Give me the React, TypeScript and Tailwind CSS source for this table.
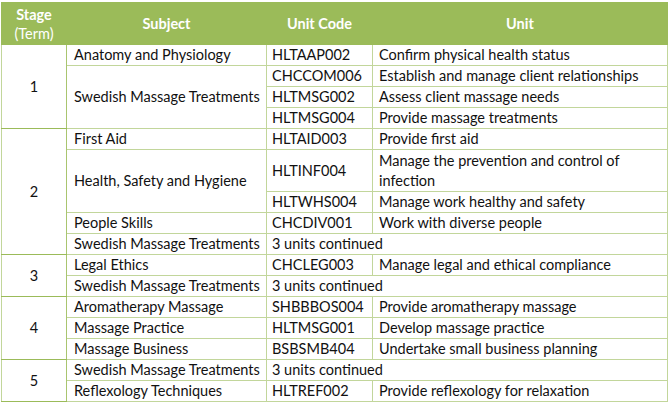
import React from 'react';

type Row = {
  stage?: { label: string; span: number };
  subject?: { label: string; span: number };
  code?: string;
  unit?: string;
  continued?: boolean;
  tall?: boolean;
};

const rows: Row[] = [
  { stage: { label: '1', span: 4 }, subject: { label: 'Anatomy and Physiology', span: 1 }, code: 'HLTAAP002', unit: 'Confirm physical health status' },
  { subject: { label: 'Swedish Massage Treatments', span: 3 }, code: 'CHCCOM006', unit: 'Establish and manage client relationships' },
  { code: 'HLTMSG002', unit: 'Assess client massage needs' },
  { code: 'HLTMSG004', unit: 'Provide massage treatments' },
  { stage: { label: '2', span: 5 }, subject: { label: 'First Aid', span: 1 }, code: 'HLTAID003', unit: 'Provide first aid' },
  { subject: { label: 'Health, Safety and Hygiene', span: 2 }, code: 'HLTINF004', unit: 'Manage the prevention and control of infection', tall: true },
  { code: 'HLTWHS004', unit: 'Manage work healthy and safety' },
  { subject: { label: 'People Skills', span: 1 }, code: 'CHCDIV001', unit: 'Work with diverse people' },
  { subject: { label: 'Swedish Massage Treatments', span: 1 }, continued: true },
  { stage: { label: '3', span: 2 }, subject: { label: 'Legal Ethics', span: 1 }, code: 'CHCLEG003', unit: 'Manage legal and ethical compliance' },
  { subject: { label: 'Swedish Massage Treatments', span: 1 }, continued: true },
  { stage: { label: '4', span: 3 }, subject: { label: 'Aromatherapy Massage', span: 1 }, code: 'SHBBBOS004', unit: 'Provide aromatherapy massage' },
  { subject: { label: 'Massage Practice', span: 1 }, code: 'HLTMSG001', unit: 'Develop massage practice' },
  { subject: { label: 'Massage Business', span: 1 }, code: 'BSBSMB404', unit: 'Undertake small business planning' },
  { stage: { label: '5', span: 2 }, subject: { label: 'Swedish Massage Treatments', span: 1 }, continued: true },
  { subject: { label: 'Reflexology Techniques', span: 1 }, code: 'HLTREF002', unit: 'Provide reflexology for relaxation' },
];

const cell = 'border border-[#c2d69b] py-0 leading-[20px] align-middle';

export default function App() {
  return (
    <div className="w-[669px] h-[405px] bg-white pt-[2px] pl-[1px] font-['Lato','Liberation_Sans',sans-serif] text-[14.5px] text-[#111]">
      <table className="w-[666px] border-collapse table-fixed border border-[#9bbb59]">
        <colgroup>
          <col className="w-[65px]" />
          <col className="w-[200px]" />
          <col className="w-[106px]" />
          <col className="w-[295px]" />
        </colgroup>
        <thead>
          <tr className="h-[42px] bg-[#9bbb59] text-white">
            <th className="border border-[#9bbb59] p-0 leading-[19px] font-bold text-center">
              Stage
              <br />
              <span className="font-normal">(Term)</span>
            </th>
            <th className="border border-[#9bbb59] p-0 font-bold text-center">Subject</th>
            <th className="border border-[#9bbb59] p-0 font-bold text-center">Unit Code</th>
            <th className="border border-[#9bbb59] p-0 font-bold text-center">Unit</th>
          </tr>
        </thead>
        <tbody>
          {rows.map((r, i) => (
            <tr key={i} className={r.tall ? 'h-[42px]' : 'h-[21px]'}>
              {r.stage && (
                <td rowSpan={r.stage.span} className={`${cell} px-0 text-center border-b-[#9bbb59] border-r-[#a9c56f]`}>
                  {r.stage.label}
                </td>
              )}
              {r.subject && (
                <td rowSpan={r.subject.span} className={`${cell} pl-[7px] pr-0 whitespace-nowrap`}>
                  {r.subject.label}
                </td>
              )}
              {r.continued ? (
                <td colSpan={2} className={`${cell} pl-[5px] pr-0`}>
                  3 units continued
                </td>
              ) : (
                <>
                  <td className={`${cell} pl-[5px] pr-0 whitespace-nowrap`}>{r.code}</td>
                  <td className={`${cell} pl-[6px] pr-[4px]`}>{r.unit}</td>
                </>
              )}
            </tr>
          ))}
        </tbody>
      </table>
    </div>
  );
}
